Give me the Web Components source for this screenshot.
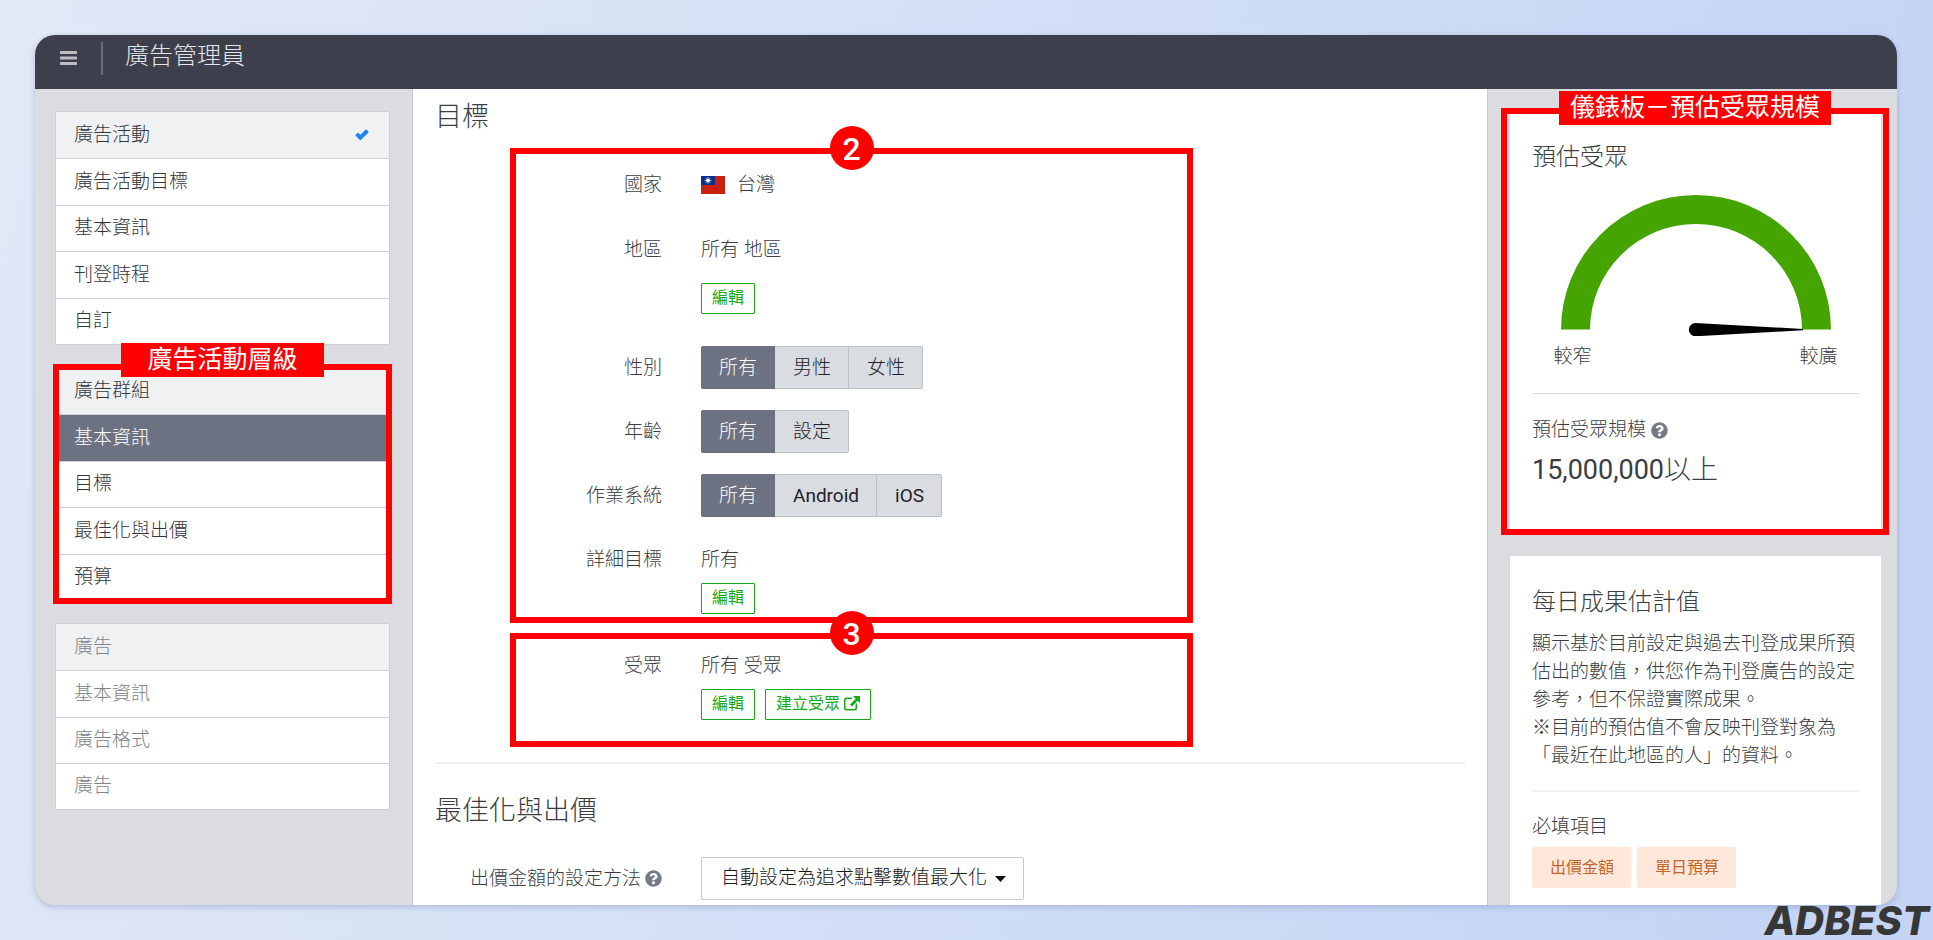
<!DOCTYPE html>
<html lang="zh-Hant">
<head>
<meta charset="utf-8">
<meta name="viewport" content="width=device-width, initial-scale=1">
<title>廣告管理員</title>
<style>
  html { height: 100%; }
  body {
    margin: 0;
    min-height: 100%;
    background: linear-gradient(105deg, #e2e8f6 0%, #d8e3f6 30%, #c7d6f5 85%, #c5d4f4 100%);
    font-family: Roboto, "Noto Sans CJK TC", sans-serif;
    font-size: 19px;
    line-height: 28px;
    color: #3a3d42;
  }
</style>
</head>
<body>
<ad-manager-app></ad-manager-app>

<script>
const define = (name, html, setup) => {
  const template = document.createElement('template');
  template.innerHTML = html;
  customElements.define(name, class extends HTMLElement {
    constructor() {
      super();
      this.attachShadow({ mode: 'open' }).append(template.content.cloneNode(true));
    }
    connectedCallback() {
      if (setup) setup(this, this.shadowRoot);
    }
  });
};

/* Icons */
const ICONS = {
  check: ['0 0 14 14', 'M1.200 7.300 3 5.500l2.400 2.400L11 2.300l1.800 1.800-7.400 7.400z'],
  help: ['0 0 512 512', 'M504 256c0 136.997-111.043 248-248 248S8 392.997 8 256C8 119.083 119.043 8 256 8s248 111.083 248 248zM262.655 90c-54.497 0-89.255 22.957-116.549 63.758-3.536 5.286-2.353 12.415 2.715 16.258l34.699 26.31c5.205 3.947 12.621 3.008 16.665-2.122 17.864-22.658 30.113-35.797 57.303-35.797 20.429 0 45.698 13.148 45.698 32.958 0 14.976-12.363 22.667-32.534 33.976C247.128 238.528 216 254.941 216 296v4c0 6.627 5.373 12 12 12h56c6.627 0 12-5.373 12-12v-1.333c0-28.462 83.186-29.647 83.186-106.667 0-58.002-60.165-102-116.531-102zM256 338c-25.365 0-46 20.635-46 46 0 25.364 20.635 46 46 46s46-20.636 46-46c0-25.364-20.635-46-46-46z'],
  external: ['0 0 17 17', 'M10 1h7v7l-2.300-2.300-5.700 5.700-2-2 5.700-5.700zM3.500 2.500h5.500v1.500H4A1.500 1.500 0 0 0 2.500 5.500v7A1.500 1.500 0 0 0 4 14h7a1.500 1.500 0 0 0 1.500-1.500v-3l1.500-1.500v5a2.500 2.500 0 0 1-2.500 2.500h-8A2.500 2.500 0 0 1 1 13V5A2.500 2.500 0 0 1 3.500 2.500z'],
  menu: ['0 0 17 14', 'M1 0h15a1 1 0 0 1 0 3H1a1 1 0 0 1 0-3zM1 5.500h15a1 1 0 0 1 0 3H1a1 1 0 0 1 0-3zM1 11h15a1 1 0 0 1 0 3H1a1 1 0 0 1 0-3z'],
  caret: ['0 0 11 6', 'M0 0h11L5.500 6z']
};
define('app-icon', `
  <style>
    :host{display:inline-flex;flex:none}
    svg{display:block;width:100%;height:100%;fill:currentColor}
    :host([name=check]) path{stroke:currentColor;stroke-width:1.500;stroke-linejoin:round}
  </style>
  <svg aria-hidden="true"><path/></svg>`, (el, root) => {
    const [box, d] = ICONS[el.getAttribute('name')];
    root.querySelector('svg').setAttribute('viewBox', box);
    root.querySelector('path').setAttribute('d', d);
  });

define('flag-taiwan', `
  <style>:host{display:inline-flex;flex:none;width:24px;height:18px} svg{width:100%;height:100%}</style>
  <svg viewBox="0 0 24 18" role="img" aria-label="台灣">
    <rect width="24" height="18" fill="#c8210f"/>
    <rect width="14" height="9" fill="#0b2f86"/>
    <circle cx="7" cy="4.500" r="1.800" fill="#fff"/>
    <path d="M7 1v7M3.500 4.500h7M4.500 2l5 5M9.500 2l-5 5" stroke="#fff" stroke-width=".8" stroke-opacity=".8"/>
  </svg>`);

/* Top bar */
define('app-header', `
  <style>
    :host{display:flex;align-items:center;height:46px;padding:0 25px 8px;background:#3d404c;color:#e4e5e8}
    button{display:flex;padding:0;border:0;background:none;color:#bdbec1}
    app-icon{width:17px;height:14px}
    i{width:2px;height:33px;margin:0 22px 0 24px;background:#6a6c76}
    h1{margin:0 0 5px;font-size:24px;line-height:32px;font-weight:300}
  </style>
  <button type="button" aria-label="選單"><app-icon name="menu"></app-icon></button>
  <i></i>
  <h1><slot></slot></h1>`);

/* Highlight frame laid over its parent, with a caption on the top edge */
define('callout-frame', `
  <style>
    :host{position:absolute;border:6px solid #f00;pointer-events:none;display:flex;justify-content:center;align-items:flex-start}
    span{box-sizing:border-box;margin-top:var(--caption-top,-23px);height:34px;padding:0 var(--caption-pad,11px);background:#f00;color:#fff;font-size:25px;line-height:34px;font-weight:400;white-space:nowrap}
  </style>
  <span><slot></slot></span>`);

/* Sidebar */
define('nav-item', `
  <style>
    :host{display:block;border-top:1px solid #cdcfd2;background:#fff}
    :host(:first-of-type){border-top:0;background:#f0f1f2}
    :host([current]){background:#6c7281;color:#fff}
    a{display:flex;align-items:center;justify-content:space-between;box-sizing:border-box;height:100%;padding:0 20px 0 18px;color:inherit;text-decoration:none;font-weight:300}
    app-icon{width:14px;height:14px;color:#2185ee}
  </style>
  <a href="#"><slot></slot></a>`, (el, root) => {
    if (el.hasAttribute('done')) {
      const icon = document.createElement('app-icon');
      icon.setAttribute('name', 'check');
      root.querySelector('a').append(icon);
    }
  });
define('nav-group', `
  <style>
    :host{display:block;position:relative;color:#33363b}
    :host([muted]){color:#808489}
    nav{display:grid;grid-auto-rows:1fr;box-sizing:border-box;min-height:234px;border:1px solid #cdcfd2;border-radius:2px}
    :host([muted]) nav{min-height:187px}
    ::slotted(callout-frame){inset:-3px -2px;--caption-pad:26px;--caption-top:-27px}
  </style>
  <nav><slot></slot></nav><slot name="callout"></slot>`);
define('app-sidebar', `
  <style>:host{display:flex;flex-direction:column;gap:22px;padding:22px 22px 22px 20px;border-right:1px solid #c9cbcf}</style>
  <nav-group>
    <nav-item done>廣告活動</nav-item><nav-item>廣告活動目標</nav-item><nav-item>基本資訊</nav-item><nav-item>刊登時程</nav-item><nav-item>自訂</nav-item>
  </nav-group>
  <nav-group>
    <nav-item>廣告群組</nav-item><nav-item current>基本資訊</nav-item><nav-item>目標</nav-item><nav-item>最佳化與出價</nav-item><nav-item>預算</nav-item>
    <callout-frame slot="callout">廣告活動層級</callout-frame>
  </nav-group>
  <nav-group muted>
    <nav-item>廣告</nav-item><nav-item>基本資訊</nav-item><nav-item>廣告格式</nav-item><nav-item>廣告</nav-item>
  </nav-group>`);

/* Form building blocks */
define('form-row', `
  <style>
    :host{display:grid;grid-template-columns:var(--label-width) 1fr;column-gap:39px;font-weight:300}
    .label,.value{display:flex;align-items:center;min-height:43px}
    .label{justify-content:flex-end;gap:4px;white-space:nowrap}
    .value{gap:12px}
    .actions{grid-column:2;display:flex;gap:10px}
  </style>
  <div class="label"><slot name="label"></slot></div>
  <div class="value"><slot></slot></div>
  <div class="actions"><slot name="action"></slot></div>`);
define('outline-button', `
  <style>
    :host{display:block;margin-top:2px}
    button{display:flex;align-items:center;gap:3px;height:31px;padding:0 10px 2px;border:1px solid #16a916;border-radius:1px;background:#fff;color:#16a916;font:400 16px/24px Roboto,"Noto Sans CJK TC",sans-serif}
    ::slotted(app-icon){width:17px;height:17px}
  </style>
  <button type="button"><slot></slot></button>`);
define('segment-control', `
  <style>
    :host{display:block}
    fieldset{display:flex;margin:0;padding:0;border:0}
    label{position:relative;display:flex;align-items:center;box-sizing:border-box;height:43px;padding:0 17px 0 18px;border:1px solid #bcc1c8;border-left-width:0;background:#d9dce1;color:#1f2226}
    label:first-of-type{border-radius:2px 0 0 2px}
    label:last-of-type{border-radius:0 2px 2px 0}
    label:has(:checked){background:#6c7281;border-color:#6c7281;color:#fff}
    input{position:absolute;inset:0;margin:0;opacity:0}
    .latin{font-weight:400}
  </style>
  <fieldset></fieldset>`, (el, root) => {
    const set = root.querySelector('fieldset');
    set.setAttribute('aria-label', el.getAttribute('label'));
    el.getAttribute('options').split(',').forEach((text, i) => {
      const label = document.createElement('label');
      const input = document.createElement('input');
      input.type = 'radio';
      input.name = 'choice';
      input.checked = i === 0;
      if (/^[a-z]/i.test(text)) label.className = 'latin';
      label.append(input, text);
      set.append(label);
    });
  });
define('select-box', `
  <style>
    :host{display:inline-grid;align-items:center;position:relative}
    select{appearance:none;box-sizing:border-box;width:323px;height:43px;margin:0;padding:0 30px 2px 19px;border:1px solid #c6c8cb;border-radius:2px;background:#fff;color:#17191c;font:300 19px/28px Roboto,"Noto Sans CJK TC",sans-serif}
    app-icon{position:absolute;right:18px;width:11px;height:6px;color:#111;pointer-events:none}
  </style>
  <select aria-label="出價金額的設定方法"><option>自動設定為追求點擊數值最大化</option></select>
  <app-icon name="caret"></app-icon>`);
define('numbered-frame', `
  <style>
    :host{display:flex;flex-direction:column;gap:21px;position:relative;box-sizing:border-box;max-width:683px;margin-left:75px;border:6px solid #f00;--label-width:146px}
    b{position:absolute;top:-28px;left:50%;width:44px;height:44px;margin-left:-22px;border-radius:50%;background:#f00;color:#fff;font-size:32px;line-height:46px;font-weight:500;text-align:center}
  </style>
  <b></b><slot></slot>`, (el, root) => {
    root.querySelector('b').textContent = el.getAttribute('number');
  });

define('targeting-form', `
  <style>
    :host{display:block;padding:12px 22px 5px;background:#fff;--label-width:227px}
    h2{margin:0;font-size:27px;line-height:32px;font-weight:300}
    .targeting{margin-top:15px;padding:9px 0 3px}
    .audience{margin-top:10px;padding:5px 0 21px}
    .region{margin-top:1px;padding-bottom:11px}
    .region outline-button{margin-top:12px}
    hr{height:2px;margin:15px 0 31px;border:0;background:#eeeff0}
    .bid{margin-top:30px}
    app-icon[name=help]{width:17px;height:17px;color:#747b84}
  </style>
  <h2>目標</h2>
  <numbered-frame class="targeting" number="2">
    <form-row><span slot="label">國家</span><flag-taiwan></flag-taiwan><span>台灣</span></form-row>
    <form-row class="region"><span slot="label">地區</span><span>所有 地區</span><outline-button slot="action">編輯</outline-button></form-row>
    <form-row><span slot="label">性別</span><segment-control label="性別" options="所有,男性,女性"></segment-control></form-row>
    <form-row><span slot="label">年齡</span><segment-control label="年齡" options="所有,設定"></segment-control></form-row>
    <form-row><span slot="label">作業系統</span><segment-control label="作業系統" options="所有,Android,iOS"></segment-control></form-row>
    <form-row><span slot="label">詳細目標</span><span>所有</span><outline-button slot="action">編輯</outline-button></form-row>
  </numbered-frame>
  <numbered-frame class="audience" number="3">
    <form-row><span slot="label">受眾</span><span>所有 受眾</span>
      <outline-button slot="action">編輯</outline-button>
      <outline-button slot="action">建立受眾<app-icon name="external"></app-icon></outline-button></form-row>
  </numbered-frame>
  <hr>
  <h2>最佳化與出價</h2>
  <form-row class="bid"><span slot="label">出價金額的設定方法</span><app-icon slot="label" name="help"></app-icon><select-box></select-box></form-row>`);

/* Right column */
define('side-card', `
  <style>
    :host{display:block;position:relative;box-sizing:border-box;padding:30px 22px 14px;background:#fff;font-weight:300}
    h3{margin:0;font-size:24px;line-height:32px;font-weight:300}
    ::slotted(hr){margin:0;border:0}
    ::slotted(callout-frame){inset:-3px -8px -1px -9px}
  </style>
  <h3><slot name="title"></slot></h3><slot></slot>`);
define('audience-gauge', `
  <style>
    :host{display:flex;flex-direction:column;align-items:center;margin-top:22px}
    svg{display:block;width:270px;height:141px}
    div{display:flex;justify-content:space-between;width:284px;margin-top:7px}
  </style>
  <svg viewBox="0 0 270 141" aria-hidden="true">
    <path d="M0 134.500a135 134.500 0 0 1 270 0h-29a106 105.500 0 0 0-212 0z" fill="#46a400"/>
    <path d="M134.500 128l107.500 6v1.300l-107.500 6a6.500 6.500 0 0 1 0-13.300z" fill="#000"/>
  </svg>
  <div><span>較窄</span><span>較廣</span></div>`);
define('required-tag', `
  <style>:host{display:block;padding:7px 17px 6px 18px;border-radius:2px;background:#ffe8d9;color:#c4662a;font-size:16px;line-height:28px;font-weight:400}</style>
  <slot></slot>`);
define('estimate-panel', `
  <style>
    :host{display:flex;flex-direction:column;gap:22px;padding:22px 16px 0 22px;border-left:1px solid #c9cbcf}
    .audience{height:423px}
    .daily{flex:1}
    hr{height:1px;background:#dadcde}
    .audience hr{margin:22px 0}
    .daily hr{height:2px;background:#eeeff0;margin:20px 0 21px}
    p{margin:0}
    .size{display:flex;align-items:center;gap:5px}
    .size app-icon{width:17px;height:17px;color:#747b84}
    .total{margin-top:8px;font-size:27px;line-height:36px}
    .total b{font-weight:400}
    .note{margin-top:12px}
    .tags{display:flex;gap:6px;margin-top:6px}
  </style>
  <side-card class="audience">
    <span slot="title">預估受眾</span>
    <audience-gauge></audience-gauge>
    <hr>
    <p class="size">預估受眾規模<app-icon name="help"></app-icon></p>
    <p class="total"><b>15,000,000</b>以上</p>
    <callout-frame>儀錶板－預估受眾規模</callout-frame>
  </side-card>
  <side-card class="daily">
    <span slot="title">每日成果估計值</span>
    <p class="note">顯示基於目前設定與過去刊登成果所預估出的數值，供您作為刊登廣告的設定參考，但不保證實際成果。<br>※目前的預估值不會反映刊登對象為「最近在此地區的人」的資料。</p>
    <hr>
    <p>必填項目</p>
    <div class="tags"><required-tag>出價金額</required-tag><required-tag>單日預算</required-tag></div>
  </side-card>`);

define('brand-mark', `
  <style>:host{display:block;padding-right:4px;text-align:right;color:#373737;font:italic 800 40px/32px Inter,sans-serif}</style>
  <slot></slot>`);

define('ad-manager-app', `
  <style>
    :host{display:block}
    .window{margin:35px 36px 0 35px;border-radius:20px;overflow:hidden;background:#dbdce0;box-shadow:0 2px 6px rgba(80,100,160,.3)}
    .columns{display:grid;grid-template-columns:378px minmax(0,1fr) 410px}
  </style>
  <div class="window">
    <app-header>廣告管理員</app-header>
    <div class="columns">
      <app-sidebar></app-sidebar>
      <targeting-form></targeting-form>
      <estimate-panel></estimate-panel>
    </div>
  </div>
  <brand-mark>ADBEST</brand-mark>`);
</script>
</body>
</html>
